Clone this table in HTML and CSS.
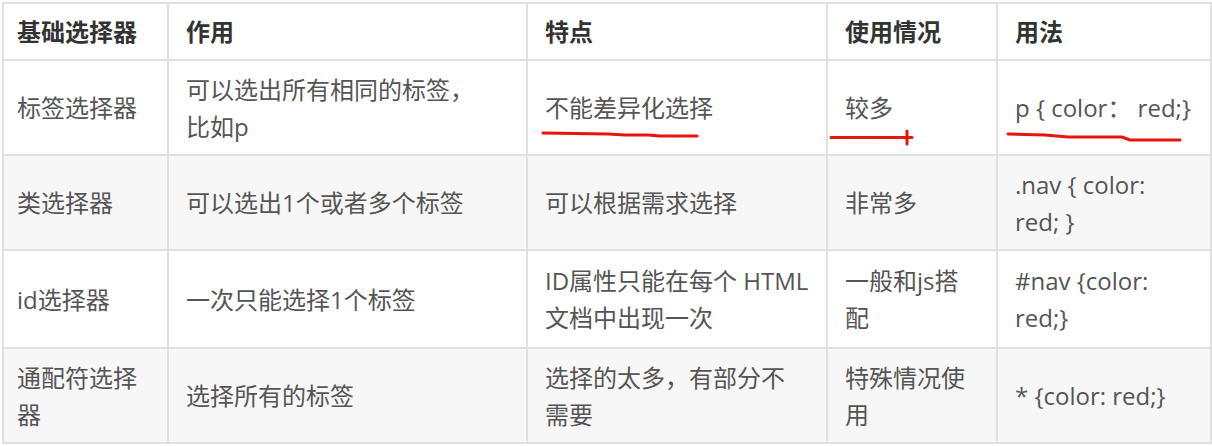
FILE: index.html
```html
<!DOCTYPE html>
<html lang="zh-CN">

<head>
    <meta charset="UTF-8">
    <title>基础选择器</title>
    <link rel="stylesheet" href="styles.css">
</head>

<body>
    <div id="page">
        <table id="selector-table">
            <colgroup>
                <col class="col-name">
                <col class="col-use">
                <col class="col-feature">
                <col class="col-freq">
                <col class="col-usage">
            </colgroup>
            <thead>
                <tr>
                    <th>基础选择器</th>
                    <th>作用</th>
                    <th>特点</th>
                    <th>使用情况</th>
                    <th>用法</th>
                </tr>
            </thead>
            <tbody>
                <tr>
                    <td>标签选择器</td>
                    <td>可以选出所有相同的标签，<br>比如p</td>
                    <td>不能差异化选择</td>
                    <td>较多</td>
                    <td>p { color： red;}</td>
                </tr>
                <tr>
                    <td>类选择器</td>
                    <td>可以选出1个或者多个标签</td>
                    <td>可以根据需求选择</td>
                    <td>非常多</td>
                    <td>.nav { color:<br>red; }</td>
                </tr>
                <tr class="tall">
                    <td>id选择器</td>
                    <td>一次只能选择1个标签</td>
                    <td>ID属性只能在每个 HTML<br>文档中出现一次</td>
                    <td>一般和js搭<br>配</td>
                    <td>#nav {color:<br>red;}</td>
                </tr>
                <tr>
                    <td>通配符选择<br>器</td>
                    <td>选择所有的标签</td>
                    <td>选择的太多，有部分不<br>需要</td>
                    <td>特殊情况使<br>用</td>
                    <td>* {color: red;}</td>
                </tr>
            </tbody>
        </table>

        <!-- 手描きの赤い下線 -->
        <svg class="marks" width="1212" height="446" viewBox="0 0 1212 446">
            <path d="M543 133 L608 134 L625 135 L648 135 L660 136 L697 136" />
            <path d="M831 137.5 L912 137.5 M907 131 L907 144" />
            <path d="M1008 134 L1045 135 L1068 137 L1122 137 L1130 140 L1180 140" />
        </svg>
    </div>
</body>

</html>
```

FILE: styles.css
```css
body {
    margin: 0;
    background-color: #fff;
    font-family: "Open Sans", "Noto Sans CJK SC", sans-serif;
}

#page {
    position: relative;
    width: 1212px;
    height: 446px;
    overflow: hidden;
}

#selector-table {
    border-collapse: collapse;
    table-layout: fixed;
    width: 1208px;
    margin: 2px 0 0 2px;
    font-size: 24px;
    line-height: 37px;
    color: #555;
}

.col-name {
    width: 165px;
}

.col-use {
    width: 359px;
}

.col-feature {
    width: 300px;
}

.col-freq {
    width: 170px;
}

.col-usage {
    width: 214px;
}

th,
td {
    border: 2px solid #e0e0e0;
    padding: 0 0 0 17px;
    text-align: left;
    vertical-align: middle;
    white-space: nowrap;
}

th:first-child,
td:first-child {
    padding-left: 13px;
}

th {
    height: 55px;
    color: #333;
    font-weight: bold;
}

tbody tr {
    height: 95px;
}

tbody tr.tall {
    height: 98px;
}

tbody tr:nth-child(2n) {
    background-color: #f7f7f7;
}

.marks {
    position: absolute;
    left: 0;
    top: 0;
    pointer-events: none;
}

.marks path {
    fill: none;
    stroke: #e8150f;
    stroke-width: 3;
    stroke-linecap: round;
    stroke-linejoin: round;
}
```
